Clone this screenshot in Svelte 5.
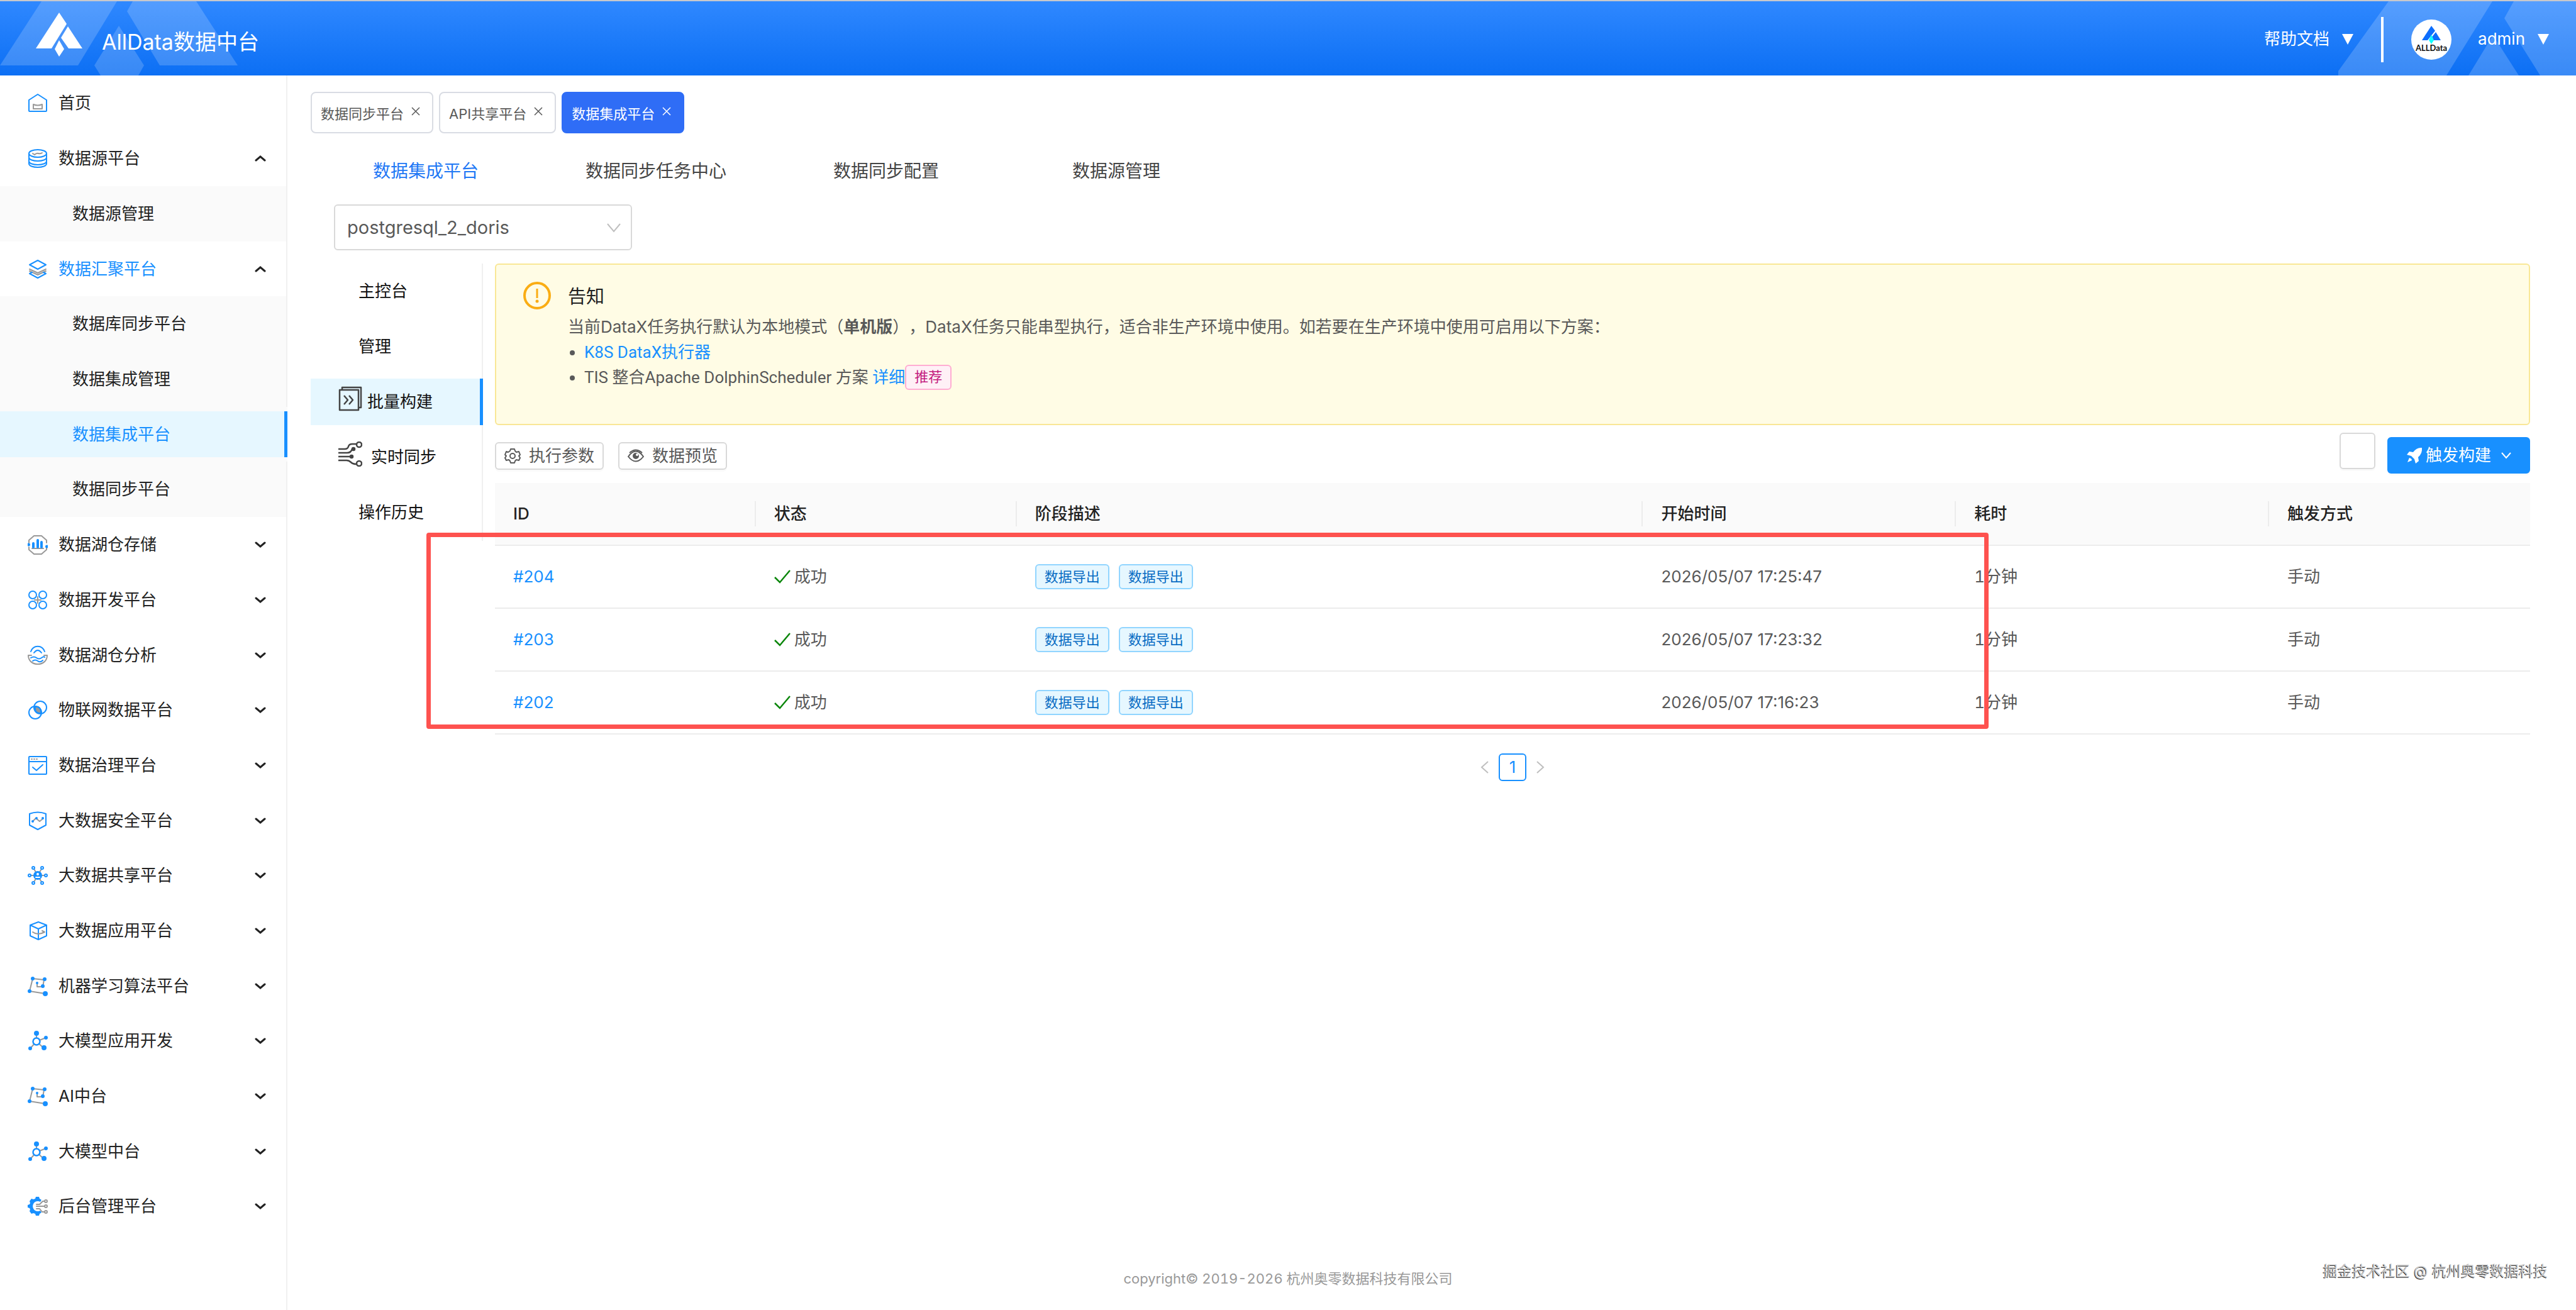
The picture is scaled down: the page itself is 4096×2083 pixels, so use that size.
<script lang="ts">
  type MenuItem = { label: string; icon: string; open?: boolean; active?: boolean; plain?: boolean; children?: string[] }

  const menu: MenuItem[] = [
    { label: '首页', icon: 'home', plain: true },
    { label: '数据源平台', icon: 'source', open: true, children: ['数据源管理'] },
    {
      label: '数据汇聚平台', icon: 'layers', open: true, active: true,
      children: ['数据库同步平台', '数据集成管理', '数据集成平台', '数据同步平台']
    },
    { label: '数据湖仓存储', icon: 'storage' },
    { label: '数据开发平台', icon: 'develop' },
    { label: '数据湖仓分析', icon: 'lake' },
    { label: '物联网数据平台', icon: 'iot' },
    { label: '数据治理平台', icon: 'govern' },
    { label: '大数据安全平台', icon: 'shield' },
    { label: '大数据共享平台', icon: 'share' },
    { label: '大数据应用平台', icon: 'cube' },
    { label: '机器学习算法平台', icon: 'learn' },
    { label: '大模型应用开发', icon: 'model' },
    { label: 'AI中台', icon: 'learn' },
    { label: '大模型中台', icon: 'model' },
    { label: '后台管理平台', icon: 'admin' }
  ]
  const currentPage = '数据集成平台'

  const tabs = ['数据同步平台', 'API共享平台', '数据集成平台']
  const sections = ['数据集成平台', '数据同步任务中心', '数据同步配置', '数据源管理']
  const steps = [
    { label: '主控台' },
    { label: '管理' },
    { label: '批量构建', icon: 'batch' },
    { label: '实时同步', icon: 'stream' },
    { label: '操作历史' }
  ]
  const columns = ['ID', '状态', '阶段描述', '开始时间', '耗时', '触发方式']
  const rows = [
    { id: 204, start: '2026/05/07 17:25:47' },
    { id: 203, start: '2026/05/07 17:23:32' },
    { id: 202, start: '2026/05/07 17:16:23' }
  ]

  let activeTab = $state('数据集成平台')
  let activeSection = $state('数据集成平台')
  let activeStep = $state('批量构建')
  let pipeline = $state('postgresql_2_doris')
</script>

{#snippet menuIcon(name: string)}
  <svg class="menu-icon" viewBox="0 0 32 32" fill="none" stroke="#1890ff" stroke-width="2" stroke-linejoin="round" stroke-linecap="round">
    {#if name === 'home'}
      <path d="M2 11 16 2l14 9v17a1 1 0 0 1-1 1H3a1 1 0 0 1-1-1z" />
      <path d="M9 18v7h14v-7q-7 3-14 0z" stroke="#999" />
    {:else if name === 'source'}
      <ellipse cx="16" cy="8" rx="14" ry="6" />
      <path d="M2 9v5c0 8 28 8 28 0V9M2 15v5c0 8 28 8 28 0v-5M2 21v3c0 8 28 8 28 0v-3" />
      <path d="M8 8l3 2q3-3 6-2t6-1" stroke="#999" />
    {:else if name === 'layers'}
      <path d="M3 16l13 6 13-6M3 19l13 6 13-6" stroke="#999" />
      <path d="M16 2 29 9l-13 7L3 9z" />
      <path d="M7 21l-4 2 13 7 13-7-4-2" />
    {:else if name === 'storage'}
      <path d="M2 13V9l8-7h12l8 7v4M2 20v4l8 7h12l8-7v-4" stroke="#999" />
      <path d="M7 22h18" stroke="#999" />
      <path d="M9 20v-6M16 20V9M22 20v-8" stroke-width="4" />
      <circle cx="1.5" cy="16" r="1.5" fill="#1890ff" />
      <circle cx="30.5" cy="19" r="1.5" fill="#1890ff" />
    {:else if name === 'develop'}
      <path d="M16 11v10M11 16h10" stroke="#999" />
      <circle cx="8" cy="8" r="6" />
      <circle cx="24" cy="8" r="6" />
      <circle cx="8" cy="24" r="6" />
      <circle cx="24" cy="24" r="6" />
    {:else if name === 'lake'}
      <path d="M5 10C9-1 23-1 27 10M10 12q6-8 12 0" />
      <path d="M6 16H1c0 9 7 14 15 14s15-5 15-14h-5" stroke="#999" />
      <path d="M5 20q5-3 9 0t8 0 5-1M8 25q4-3 8 0t8-1" />
    {:else if name === 'iot'}
      <path d="M12 11q9-2 9 10-10 1-9-10z" fill="#999" />
      <circle cx="12" cy="20" r="10" />
      <circle cx="20" cy="12" r="10" />
    {:else if name === 'govern'}
      <rect x="2" y="2" width="28" height="28" rx="1" />
      <path d="M2 10h28M8 19l6 5 10-9" />
      <path d="M6 6h1M10 6h1M14 6h1" stroke="#999" />
    {:else if name === 'shield'}
      <path d="M3 5q13-5 26 0v18l-13 7-13-7z" />
      <path d="M8 17l5-5 6 5 5-4" stroke="#999" />
      <circle cx="8" cy="17" r="1" fill="#1890ff" />
      <circle cx="14" cy="12" r="1" fill="#1890ff" />
      <circle cx="24" cy="12" r="1" fill="#1890ff" />
    {:else if name === 'share'}
      <path d="M16 16 9 4M16 16l7-12M16 16H4M16 16h12M16 16 9 28M16 16l7 12" stroke="#999" />
      <circle cx="16" cy="16" r="6" fill="#1890ff" />
      <circle cx="16" cy="14" r="1" fill="#fff" stroke="#fff" />
      <path d="M13 19h6" stroke="#fff" />
      {#each [[9, 4], [23, 4], [3, 16], [29, 16], [9, 28], [23, 28]] as [x, y]}
        <circle cx={x} cy={y} r="2" fill="#fff" />
      {/each}
    {:else if name === 'cube'}
      <path d="M17 2 30 7v17l-13 6-13-6V7zM4 7l13 6 13-6M17 13v17" />
      <path d="M8 18q8 6 19 0l-4-2" stroke="#999" />
    {:else if name === 'learn'}
      <path d="M3 24 8 4l18 2-2 11h-9v-5M3 24l25 4" stroke="#999" />
      <circle cx="8" cy="4" r="2" fill="#1890ff" />
      <circle cx="27" cy="5" r="2" fill="#1890ff" />
      <circle cx="15" cy="11" r="1" fill="#1890ff" />
      <circle cx="24" cy="16" r="2" fill="#1890ff" />
      <circle cx="3" cy="24" r="2" fill="#1890ff" />
      <circle cx="28" cy="28" r="3" fill="#1890ff" />
    {:else if name === 'model'}
      <path d="M14 17V5M14 17l15-6M14 17 4 28M14 17l12 11" stroke="#999" />
      <circle cx="14" cy="17" r="5.5" fill="#fff" stroke-width="2.5" />
      <circle cx="14" cy="4" r="3" fill="#1890ff" />
      <circle cx="29" cy="11" r="2" fill="#1890ff" />
      <circle cx="4" cy="28" r="2" fill="#1890ff" />
      <circle cx="26" cy="27" r="3" fill="#1890ff" />
    {:else}
      <path d="M13 1h5l1 3 3 2-2 3a8 8 0 1 0 0 14l2 3-3 2-1 3h-5l-1-3-3-1-3 1-3-4 1-3-1-2-3-1v-4l3-1 1-2-1-3 3-4 3 1 3-1z" fill="#1890ff" stroke="none" />
      <path d="M14 13h5l5-5h3M14 16h13M14 20h5l4 5h4" stroke="#999" />
      <circle cx="29" cy="8" r="2" stroke="#999" />
      <circle cx="29" cy="16" r="2" stroke="#999" />
      <circle cx="29" cy="25" r="2" stroke="#999" />
    {/if}
  </svg>
{/snippet}

{#snippet cross()}
  <svg class="cross" viewBox="0 0 14 14" fill="none" stroke="currentColor" stroke-width="1.5"><path d="M1 1l12 12M13 1 1 13" /></svg>
{/snippet}

<div class="page">
  <header class="topbar">
    <svg class="deco" width="380" height="118" viewBox="0 0 380 118" fill="#fff" fill-opacity="0.18">
      <path d="M66 0h120l-62 102H0z" />
      <path d="M211 0h101l66 102H254L202 16z" />
      <path d="m189 39 40 63-9 16h-60l-10-16z" />
    </svg>
    <svg class="deco right" width="378" height="118" viewBox="0 0 378 118" fill="#fff" fill-opacity="0.19">
      <path d="M80 0h165l-73 118H-5z" />
      <path d="M279 0h99v118h-57L264 27z" />
      <path d="m246 54 41 64h-80z" />
    </svg>
    <div class="brand">
      <svg class="logo" viewBox="0 0 74 70" fill="#fff">
        <path d="M37 0 49 18 25 57H0z" />
        <path d="m51 22 23 35H52L40 40z" />
        <path d="m37 44 8 14-8 12-7-12z" />
      </svg>
      <h1>AllData数据中台</h1>
    </div>
    <div class="account">
      <button class="drop">帮助文档 <i class="tri"></i></button>
      <span class="bar"></span>
      <svg class="avatar" viewBox="0 0 64 64">
        <circle cx="32" cy="32" r="32" fill="#fff" />
        <path d="m32 10 6 8-12 15H17z" fill="#0d6efd" />
        <path d="m39 20 8 13H35l-3-4z" fill="#0d6efd" />
        <path d="m32 24 4 9-4 6-4-6z" fill="#1ff" />
        <text x="32" y="50" text-anchor="middle">ALLData</text>
      </svg>
      <button class="drop">admin <i class="tri"></i></button>
    </div>
  </header>

  <div class="body">
    <nav class="sidebar">
      {#each menu as item}
        <a class="menu-title" class:active={item.active} href="#{item.icon}">
          {@render menuIcon(item.icon)}
          <span>{item.label}</span>
          {#if !item.plain}
            <svg class="arrow" class:up={item.open} viewBox="0 0 18 10" fill="none" stroke="#222" stroke-width="3" stroke-linecap="round"><path d="m2 2 7 6 7-6" /></svg>
          {/if}
        </a>
        {#if item.children}
          <div class="submenu">
            {#each item.children as child}
              <a class="menu-sub" class:selected={child === currentPage} href="#{child}">{child}</a>
            {/each}
          </div>
        {/if}
      {/each}
    </nav>

    <main>
      <div class="tabs">
        {#each tabs as tab}
          <button class="tab" class:on={tab === activeTab} onclick={() => (activeTab = tab)}>{tab}{@render cross()}</button>
        {/each}
      </div>

      <div class="sections">
        {#each sections as s}
          <button class:on={s === activeSection} onclick={() => (activeSection = s)}>{s}</button>
        {/each}
      </div>

      <div class="picker">
        <select aria-label="数据管道" bind:value={pipeline}>
          <option>postgresql_2_doris</option>
        </select>
        <svg viewBox="0 0 22 16" fill="none" stroke="#bfbfbf" stroke-width="2"><path d="m1 2 10 12L21 2" /></svg>
      </div>

      <div class="workspace">
        <div class="steps">
          {#each steps as step}
            <button class="step" class:on={step.label === activeStep} class:has-icon={step.icon} onclick={() => (activeStep = step.label)}>
              {#if step.icon === 'batch'}
                <svg class="step-icon" viewBox="0 0 38 40" fill="none" stroke="#444" stroke-width="2.5" stroke-linejoin="round">
                  <path d="M6 5V2h30v32h-4" />
                  <rect x="2" y="6" width="30" height="32" />
                  <path d="m9 15 6 7-6 7M17 15l6 7-6 7" />
                </svg>
              {:else if step.icon === 'stream'}
                <svg class="step-icon wide" viewBox="0 0 38 40" fill="none" stroke="#444" stroke-width="2.5">
                  <path d="M0 12h10q5 0 6-4t6-4h7M0 18h14q6 0 8-6M0 24h20M0 30h13q4 0 7 3t9 3" />
                  <circle cx="33" cy="5" r="4" />
                  <circle cx="24" cy="12" r="2" fill="#444" />
                  <circle cx="21" cy="24" r="2" fill="#444" />
                  <circle cx="33" cy="35" r="4" />
                </svg>
              {/if}
              {step.label}
            </button>
          {/each}
        </div>

        <div class="content">
          <section class="notice">
            <svg class="warn" viewBox="0 0 44 44" fill="none" stroke="#faad14" stroke-width="4">
              <circle cx="22" cy="22" r="20" />
              <path d="M22 11v15" stroke-width="3" />
              <circle cx="22" cy="31" r="2.5" fill="#faad14" stroke="none" />
            </svg>
            <div>
              <h2>告知</h2>
              <p>当前DataX任务执行默认为本地模式（<b>单机版</b>），DataX任务只能串型执行，适合非生产环境中使用。如若要在生产环境中使用可启用以下方案：</p>
              <ul>
                <li><a href="#k8s">K8S DataX执行器</a></li>
                <li>TIS 整合Apache DolphinScheduler 方案 <a href="#ds">详细</a><span class="tag pink">推荐</span></li>
              </ul>
            </div>
          </section>

          <div class="toolbar">
            <button class="btn small">
              <svg viewBox="0 0 26 26" fill="none" stroke="currentColor" stroke-width="2" stroke-linejoin="round">
                <path d="m10 2-1 3-3 2-3-1-2 5 2 2-2 3 2 4 4-1 2 2 1 3h6l1-3 2-2 4 1 2-4-2-3 2-2-2-5-4 1-2-2-1-3z" />
                <circle cx="13" cy="13" r="4" />
              </svg>
              执行参数
            </button>
            <button class="btn small">
              <svg viewBox="0 0 26 26" fill="none" stroke="currentColor" stroke-width="2">
                <path d="M1 14Q13-3 25 14 13 29 1 14z" />
                <path d="M3 8q10-9 20 0" />
                <circle cx="13" cy="13" r="4" fill="currentColor" />
                <circle cx="15" cy="11" r="2" fill="#fff" stroke="none" />
              </svg>
              数据预览
            </button>
            <div class="run">
              <button class="btn blank" aria-label="刷新"></button>
              <button class="btn primary">
                <svg viewBox="0 0 26 26" fill="currentColor">
                  <path d="M25 1q1 9-6 15l1 6-5 4-2-7-5-5-7-2 4-5 6 1q6-8 14-7zM5 17q4 1 4 4l-7 3z" />
                </svg>
                触发构建
                <svg class="caret" viewBox="0 0 16 16" fill="none" stroke="currentColor" stroke-width="2"><path d="m1 4 7 8 7-8" /></svg>
              </button>
            </div>
          </div>

          <div class="table-wrap">
            <table>
              <colgroup>
                <col class="c5" /><col class="c5" /><col class="c12" /><col class="c6" /><col class="c6" /><col class="c5" />
              </colgroup>
              <thead>
                <tr>{#each columns as col}<th scope="col"><span>{col}</span></th>{/each}</tr>
              </thead>
              <tbody>
                {#each rows as row}
                  <tr>
                    <td><a href="#{row.id}">#{row.id}</a></td>
                    <td>
                      <span class="status">
                        <svg viewBox="0 0 26 26" fill="none" stroke="#0a860a" stroke-width="2.5"><path d="m1 14 8 8L25 3" /></svg>成功
                      </span>
                    </td>
                    <td><span class="tag blue">数据导出</span><span class="tag blue">数据导出</span></td>
                    <td>{row.start}</td>
                    <td class="num">1分钟</td>
                    <td>手动</td>
                  </tr>
                {/each}
              </tbody>
            </table>
            <div class="highlight"></div>
          </div>

          <div class="pager">
            <button aria-label="上一页" disabled><svg viewBox="0 0 14 22" fill="none" stroke="currentColor" stroke-width="2"><path d="M12 2 2 11l10 9" /></svg></button>
            <button class="on">1</button>
            <button aria-label="下一页" disabled><svg viewBox="0 0 14 22" fill="none" stroke="currentColor" stroke-width="2"><path d="m2 2 10 9-10 9" /></svg></button>
          </div>
        </div>
      </div>
    </main>
  </div>

  <footer class="num">copyright© 2019-2026 杭州奥零数据科技有限公司</footer>
  <div class="watermark">掘金技术社区 @ 杭州奥零数据科技</div>
</div>

<style>
  :global(body) { margin: 0; background: #fff; }
  .page {
    position: relative;
    display: flex;
    flex-direction: column;
    min-height: 100vh;
    overflow: hidden;
    font: 26px/40px Inter, "Noto Sans CJK SC", sans-serif;
    text-spacing-trim: space-all;
    color: #595959;
  }
  .page * { box-sizing: border-box; }
  button {
    padding: 0;
    border: 0;
    background: none;
    font: inherit;
    color: inherit;
    cursor: pointer;
  }
  a { color: #1890ff; text-decoration: none; }
  svg { flex: none; }
  .num { font-variant-numeric: tabular-nums; }

  /* top bar */
  .topbar {
    position: relative;
    display: flex;
    justify-content: space-between;
    height: 120px;
    border-top: 2px solid #c8c8cc;
    background: linear-gradient(#2f88ff, #0c6ff4);
    color: #fff;
  }
  .deco { position: absolute; left: 0; top: 0; }
  .deco.right { left: auto; right: 0; }
  .brand { position: relative; display: flex; padding: 18px 0 0 57px; gap: 31px; }
  .logo { width: 74px; height: 70px; }
  h1 { margin: 27px 0 0; font-size: 34px; font-weight: 400; line-height: 40px; }
  .account { position: relative; display: flex; align-items: center; padding: 2px 43px 0 0; }
  .drop { display: flex; align-items: center; gap: 20px; }
  .tri { border: 9px solid transparent; border-top: 17px solid #fff; border-bottom: 0; }
  .bar { width: 4px; height: 72px; margin: 2px 44px 0; background: #fff; }
  .avatar { width: 64px; height: 64px; margin: 2px 42px 0 0; }
  .avatar text { font: 700 13px Lato, sans-serif; fill: #111; }

  /* sidebar */
  .body { display: flex; flex: 1; }
  .sidebar { width: 457px; border-right: 2px solid #f0f0f0; flex: none; }
  .menu-title {
    display: flex;
    align-items: center;
    height: 88px;
    padding: 0 32px 0 44px;
    gap: 17px;
    color: #222;
  }
  .menu-title:nth-of-type(3n) { height: 87px; }
  .menu-title.active { color: #1890ff; }
  .menu-icon { width: 32px; height: 32px; }
  .arrow { width: 18px; height: 10px; margin-left: auto; }
  .arrow.up { transform: scaleY(-1); }
  .submenu { background: #fafafa; }
  .menu-sub {
    display: block;
    height: 88px;
    padding-left: 115px;
    border-block: 7px solid #fafafa;
    line-height: 74px;
    color: #222;
  }
  .menu-sub.selected {
    height: 87px;
    margin-right: -2px;
    background: linear-gradient(#1890ff, #1890ff) right / 5px 100% no-repeat #e6f7ff;
    background-clip: padding-box;
    background-origin: padding-box;
    color: #1890ff;
  }

  /* main column */
  main { flex: 1; min-width: 0; padding: 26px 73px 0 37px; }
  .tabs { display: flex; gap: 9px; }
  .tab {
    display: flex;
    align-items: center;
    height: 66px;
    padding: 4px 19px 0 14px;
    gap: 12px;
    border: 2px solid #d9dce3;
    border-radius: 8px;
    font-size: 22px;
  }
  .tab.on { border-color: #2f6df6; background: #2f6df6; color: #fff; }
  .cross { width: 14px; height: 14px; margin-bottom: 8px; }
  .sections { display: flex; margin-top: 40px; }
  .sections button { width: 366px; font-size: 28px; color: #444; }
  .sections .on { color: #1f78f5; }
  .picker { position: relative; width: 474px; margin: 33px 0 21px 37px; }
  .picker select {
    display: block;
    width: 100%;
    height: 73px;
    padding: 0 19px;
    border: 2px solid #d9d9d9;
    border-radius: 6px;
    background: #fff;
    appearance: none;
    font: inherit;
    font-size: 29px;
    color: #595959;
  }
  .picker svg { position: absolute; right: 18px; top: 29px; width: 22px; height: 16px; }

  .workspace { display: flex; align-items: flex-start; gap: 19px; }
  .steps {
    display: flex;
    flex-direction: column;
    width: 274px;
    padding: 7px 0 8px;
    gap: 14px;
    border-right: 2px solid #f0f0f0;
    flex: none;
  }
  .step {
    display: flex;
    align-items: center;
    height: 74px;
    margin-right: -2px;
    padding-left: 76px;
    color: #111;
  }
  .step.has-icon { padding-left: 44px; }
  .step.on { border-right: 5px solid #1890ff; background: #e6f7ff; }
  .step-icon { width: 38px; height: 40px; margin: 0 8px 10px 0; }
  .step-icon.wide { margin-right: 14px; }

  .content { flex: 1; min-width: 0; }
  .notice {
    display: flex;
    height: 257px;
    padding: 27px 43px;
    gap: 27px;
    border: 2px solid #f9e796;
    border-radius: 6px;
    background: #fffce5;
  }
  .warn { width: 44px; height: 44px; }
  .notice h2 { margin: 4px 0 8px; font-size: 29px; font-weight: 400; line-height: 40px; color: #222; }
  .notice p { margin: 0; }
  .notice ul { margin: 0; padding-left: 26px; font-family: Roboto, "Noto Sans CJK SC", sans-serif; }
  .tag {
    display: inline-block;
    height: 40px;
    padding: 0 13px;
    border: 2px solid;
    border-radius: 6px;
    font-size: 22px;
    line-height: 36px;
    vertical-align: top;
  }
  .tag.pink { background: #fff0f6; border-color: #ffadd2; color: #c41d7f; }
  .tag.blue { margin-right: 15px; background: #e6f7ff; border-color: #91d5ff; color: #096dc4; }

  .toolbar { display: flex; align-items: flex-start; height: 80px; margin-top: 12px; gap: 23px; }
  .btn {
    display: flex;
    align-items: center;
    border: 2px solid #d9d9d9;
    border-radius: 6px;
    background: #fff;
    box-shadow: 0 3px 0 rgba(0, 0, 0, 0.02);
  }
  .btn.small { height: 44px; margin-top: 15px; padding: 0 13px; gap: 13px; }
  .btn.small svg { width: 26px; height: 26px; }
  .run { display: flex; margin-left: auto; gap: 19px; }
  .btn.blank { width: 57px; height: 58px; }
  .btn.primary {
    height: 58px;
    margin-top: 7px;
    padding: 0 28px;
    gap: 5px;
    border-color: #1890ff;
    background: #1890ff;
    color: #fff;
  }
  .btn.primary svg { width: 26px; height: 26px; }
  .btn.primary .caret { width: 16px; height: 16px; margin-left: 11px; }

  .table-wrap { position: relative; }
  table { width: 100%; table-layout: fixed; border-collapse: separate; border-spacing: 0; }
  .c5 { width: 5%; }
  .c6 { width: 6%; }
  .c12 { width: 12%; }
  th, td { height: 100px; padding: 0 0 0 29px; border-bottom: 2px solid #ececec; text-align: left; }
  th { background: #fafafa; font-weight: 500; color: #222; }
  th span { display: block; border-right: 2px solid #ececec; }
  th:last-child span { border-right: 0; }
  .status { display: flex; align-items: center; gap: 6px; }
  .status svg { width: 26px; height: 26px; }
  .highlight {
    position: absolute;
    left: -109px;
    right: 861px;
    top: 79px;
    height: 312px;
    border: 7px solid #fe524f;
    border-radius: 4px;
    pointer-events: none;
  }

  .pager { display: flex; justify-content: center; margin-top: 30px; }
  .pager button { width: 44px; height: 44px; color: #bfbfbf; line-height: 40px; }
  .pager svg { display: block; width: 14px; height: 22px; margin: 0 auto; }
  .pager .on { border: 2px solid #1890ff; border-radius: 6px; color: #1890ff; }

  /* the footer is centred on the window and overlaps the foot of the sidebar */
  footer { margin-top: -70px; padding-bottom: 30px; text-align: center; font-size: 22px; color: #999; }
  .watermark {
    position: absolute;
    right: 45px;
    bottom: 42px;
    font-size: 23px;
    color: #ccc;
    text-shadow: -1px 1px 0 #333;
  }
</style>
